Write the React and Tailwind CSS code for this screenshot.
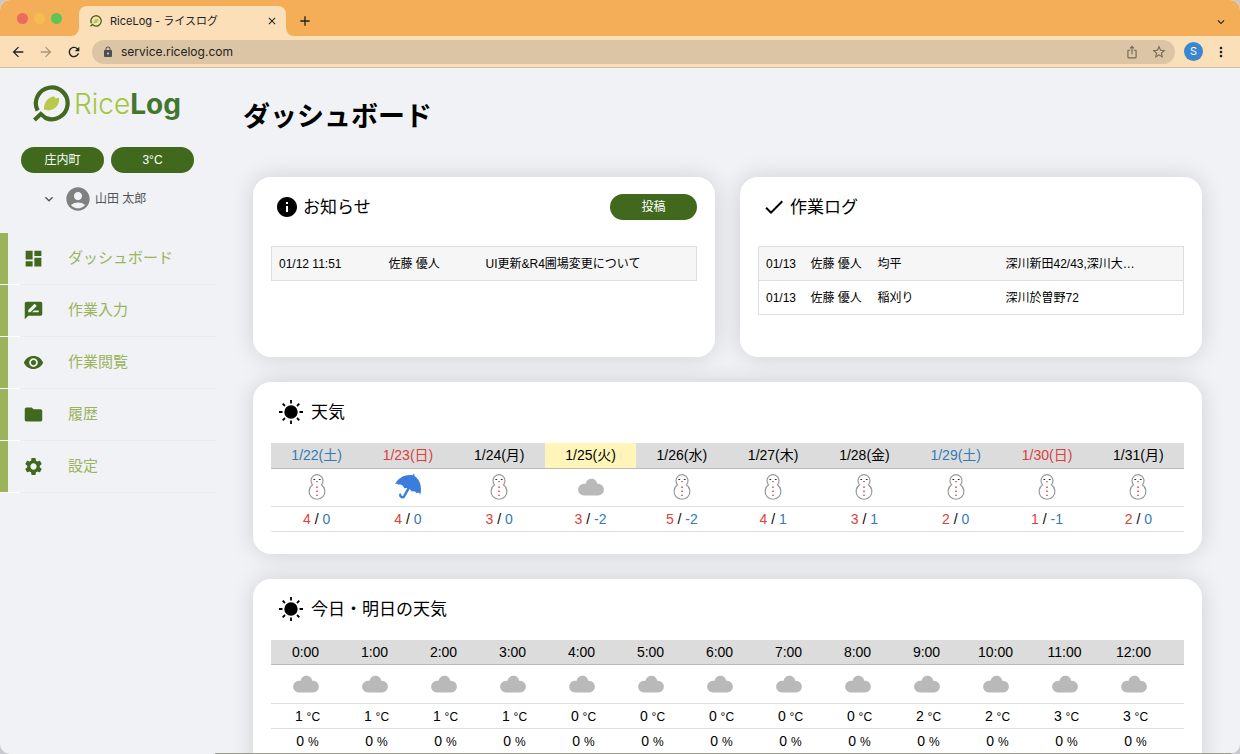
import React, { useState } from 'react';
import {
    MdAccountCircle,
    MdArrowBack,
    MdArrowForward,
    MdClose,
    MdDashboard,
    MdDone,
    MdExpandMore,
    MdFolder,
    MdInfo,
    MdIosShare,
    MdLock,
    MdMoreVert,
    MdRateReview,
    MdAdd,
    MdRefresh,
    MdSettings,
    MdStarOutline,
    MdVisibility,
} from 'react-icons/md';

const menu = [
    { label: 'ダッシュボード', icon: MdDashboard },
    { label: '作業入力', icon: MdRateReview },
    { label: '作業閲覧', icon: MdVisibility },
    { label: '履歴', icon: MdFolder },
    { label: '設定', icon: MdSettings },
];

const notices = [{ date: '01/12 11:51', user: '佐藤 優人', title: 'UI更新&R4圃場変更について' }];

const workLogs = [
    { date: '01/13', user: '佐藤 優人', work: '均平', field: '深川新田42/43,深川大…' },
    { date: '01/13', user: '佐藤 優人', work: '稲刈り', field: '深川於曽野72' },
];

const days = [
    { date: '1/22(土)', type: 'sat', icon: 'snow', high: 4, low: 0 },
    { date: '1/23(日)', type: 'sun', icon: 'rain', high: 4, low: 0 },
    { date: '1/24(月)', type: 'week', icon: 'snow', high: 3, low: 0 },
    { date: '1/25(火)', type: 'today', icon: 'cloud', high: 3, low: -2 },
    { date: '1/26(水)', type: 'week', icon: 'snow', high: 5, low: -2 },
    { date: '1/27(木)', type: 'week', icon: 'snow', high: 4, low: 1 },
    { date: '1/28(金)', type: 'week', icon: 'snow', high: 3, low: 1 },
    { date: '1/29(土)', type: 'sat', icon: 'snow', high: 2, low: 0 },
    { date: '1/30(日)', type: 'sun', icon: 'snow', high: 1, low: -1 },
    { date: '1/31(月)', type: 'week', icon: 'snow', high: 2, low: 0 },
];

const dayColors = {
    sat: 'text-[#337ab7]',
    sun: 'text-[#d9413c]',
    week: 'text-black',
    today: 'text-black bg-[#fff5b8]',
};

const hours = [1, 1, 1, 1, 0, 0, 0, 0, 0, 2, 2, 3, 3].map((temp, hour) => ({
    time: `${hour}:00`,
    temp,
    rain: 0,
}));

const LogoMark = ({ className }) => (
    <svg className={className} viewBox="0 0 37 37" fill="none">
        <path d="M4.6 25.6A15.9 15.9 0 1 1 12.6 33L7.8 29L1.4 35" stroke="#43691f" strokeWidth="4.2" />
        <path
            d="M11 24.6C10.4 18.4 14.8 11.8 21.4 11.6L22.6 13.4L26 12.6C27.4 20.6 20 27.8 11 24.6Z"
            fill="#b9c94a"
        />
    </svg>
);

const SunIcon = () => (
    <svg className="size-8" viewBox="0 0 32 32" stroke="#000" strokeWidth="1.8">
        <circle cx="16" cy="16" r="5.8" fill="#000" />
        <path d="M16 4v3.5M16 24.5V28M4 16h3.5M24.5 16H28M7.7 7.7L10 10M22 22l2.3 2.3M7.7 24.3L10 22M22 10l2.3-2.3" />
    </svg>
);

const SnowIcon = () => (
    <svg className="w-[18px] h-[26px]" viewBox="0 0 18 26">
        <path
            d="M4.6 10.8A6 6 0 1 1 13.4 10.8A7.9 7.9 0 1 1 4.6 10.8Z"
            fill="#fff"
            stroke="#999"
            strokeWidth="1.2"
        />
        <path d="M5.4 5h1.8v1H5.4zM10.8 5h1.8v1h-1.8zM8 7.2h2L9 8.6z" fill="#333" />
        <path d="M8.3 12.6h1.4V14H8.3zM8.3 16.5h1.4v1.4H8.3zM8.3 20.7h1.4v1.4H8.3z" fill="#d33" />
    </svg>
);

const RainIcon = () => (
    <svg className="size-[26px]" viewBox="0 0 26 26">
        <path
            d="M17.4 1.2L18.4 0L19.6.6L19.4 2C24.8 5.4 27.2 12.6 25.4 20.6C24.6 19 23 18.4 21.4 19.2C20.4 17.4 18.6 16.8 16.8 17.8C15.6 14.8 12 13 9.4 14.4C8.2 11.6 5.8 9.8 3.6 10.8C2.6 9.6 1.2 9.4.2 10C2.6 4.4 9.6 0 17.4 1.2Z"
            fill="#3b7ddd"
        />
        <path d="M13.4 14.6L9.2 22.2A2.2 2.2 0 0 1 5.2 20.8" fill="none" stroke="#3b7ddd" strokeWidth="2.4" strokeLinecap="round" />
    </svg>
);

const CloudIcon = () => (
    <svg className="w-[26px] h-[18px]" viewBox="0 0 26 18">
        <path d="M5.9 5.8H7.6C8 2.8 10.4.8 13.4.8S18.8 2.8 19.2 5.8H20.1A5.8 5.8 0 0 1 20.1 17.4H5.9A5.8 5.8 0 0 1 5.9 5.8Z" fill="#b9b9b9" />
    </svg>
);

const weatherIcons = { snow: SnowIcon, rain: RainIcon, cloud: CloudIcon };

const BrowserBar = () => (
    <header className="shrink-0 font-['Inter','Noto_Sans_CJK_JP',sans-serif] text-[#222]">
        <div className="flex h-9 items-end bg-[#f3ae57] pl-4 pr-3">
            <div className="flex gap-[6px] self-center pl-px">
                <span className="size-[11px] rounded-full bg-[#ec6a5e]"></span>
                <span className="size-[11px] rounded-full bg-[#f4bd4f]"></span>
                <span className="size-[11px] rounded-full bg-[#5fc454]"></span>
            </div>
            <svg className="ml-[9px] size-2" viewBox="0 0 8 8">
                <path d="M8 0V8H0A8 8 0 0 0 8 0Z" fill="#fadfb9" />
            </svg>
            <div className="flex h-[30px] w-[207px] items-center rounded-t-lg bg-[#fadfb9] pl-[11px] pr-2">
                <LogoMark className="size-3" />
                <span className="ml-2 flex-1 text-[11px]">RiceLog - ライスログ</span>
                <button aria-label="タブを閉じる">
                    <MdClose className="size-3" />
                </button>
            </div>
            <svg className="size-2" viewBox="0 0 8 8">
                <path d="M0 0V8H8A8 8 0 0 1 0 0Z" fill="#fadfb9" />
            </svg>
            <button className="mb-[7px] ml-[3px]" aria-label="新しいタブ">
                <MdAdd className="size-4" />
            </button>
            <button className="mb-[7px] ml-auto" aria-label="タブを検索">
                <MdExpandMore className="size-[14px]" />
            </button>
        </div>
        <div className="flex h-8 items-center border-b border-[#d3bd9c] bg-[#fadfb9] pl-[10px] pr-[11px]">
            <button aria-label="戻る">
                <MdArrowBack className="size-4" />
            </button>
            <button className="ml-3 text-[#a8967c]" aria-label="進む">
                <MdArrowForward className="size-4" />
            </button>
            <button className="ml-3" aria-label="再読み込み">
                <MdRefresh className="size-4" />
            </button>
            <div className="ml-[10px] flex h-6 flex-1 items-center rounded-full bg-[#dcc5a4] pl-[10px] pr-2">
                <MdLock className="size-3 text-[#4b4f55]" />
                <input
                    className="ml-[7px] flex-1 bg-transparent text-xs outline-none"
                    type="text"
                    aria-label="アドレス"
                    defaultValue="service.ricelog.com"
                />
                <button className="text-[#75695a]" aria-label="共有">
                    <MdIosShare className="size-[14px]" />
                </button>
                <button className="ml-3 text-[#75695a]" aria-label="ブックマーク">
                    <MdStarOutline className="size-4" />
                </button>
            </div>
            <button className="ml-[9px] size-[19px] rounded-full bg-[#3a86cf] text-[11px] text-white">S</button>
            <button className="ml-[10px]" aria-label="メニュー">
                <MdMoreVert className="size-4" />
            </button>
        </div>
    </header>
);

const Sidebar = ({ current, onSelect }) => (
    <aside className="w-[215px] shrink-0">
        <a href="#" className="flex items-center pl-[33px] pt-[17px]">
            <LogoMark className="size-[37px]" />
            <span className="ml-1 font-['Inter',sans-serif] text-[28px] leading-8 font-light text-[#a5c53f]">
                Rice<span className="font-bold text-[#43762f]">Log</span>
            </span>
        </a>

        <div className="mt-[25px] flex gap-[7px] pl-[21px] text-xs text-white">
            <span className="flex h-[26px] w-[83px] items-center justify-center rounded-full bg-[#40691d]">庄内町</span>
            <span className="flex h-[26px] w-[83px] items-center justify-center rounded-full bg-[#40691d]">3°C</span>
        </div>

        <button className="mt-3 flex items-center pl-[41px] text-xs text-[#555]">
            <MdExpandMore className="size-4" />
            <MdAccountCircle className="ml-[7px] size-7 text-[#808080]" />
            <span className="ml-[3px]">山田 太郎</span>
        </button>

        <nav className="mt-5">
            {menu.map(({ label, icon: Icon }) => (
                <a
                    key={label}
                    href="#"
                    className="flex h-[52px] text-[#9bb45c]"
                    aria-current={current === label ? 'page' : undefined}
                    onClick={() => onSelect(label)}
                >
                    <span className="w-5 border-b border-white">
                        <span className="block h-full w-2 bg-[#9bb45c]"></span>
                    </span>
                    <span className="flex flex-1 items-center border-b border-[#eaebee] pl-[3px]">
                        <Icon className="size-[21px] text-[#40691d]" />
                        <span className="ml-6 text-[15px]">{label}</span>
                    </span>
                </a>
            ))}
        </nav>
    </aside>
);

const Card = ({ icon, title, action, className = '', children }) => (
    <section className={`rounded-[18px] bg-white px-[18px] pt-[17px] shadow-[0_0_25px_rgba(0,0,0,0.14)] ${className}`}>
        <div className="flex h-[26px] items-center justify-between pl-1">
            <h2 className="flex items-center gap-1 text-[17px]">
                {icon}
                <span className="pt-0.5">{title}</span>
            </h2>
            {action}
        </div>
        {children}
    </section>
);

const App = () => {
    const [current, setCurrent] = useState('ダッシュボード');

    return (
        <div className="h-screen bg-[#c9c9cf] font-['Liberation_Sans','Noto_Sans_CJK_JP',sans-serif] text-black">
            <div className="flex h-full flex-col overflow-hidden rounded-[10px] bg-[#f0f2f6]">
                <BrowserBar />

                <div className="flex min-h-0 flex-1">
                    <Sidebar current={current} onSelect={setCurrent} />

                    <div className="flex min-w-0 flex-1 flex-col">
                        <main className="min-h-0 flex-1 overflow-hidden pl-[38px] pr-[38px]">
                            <h1 className="-ml-[10px] pt-[29px] text-[27px] leading-10 font-bold">ダッシュボード</h1>

                            <div className="mt-10 grid grid-cols-2 gap-[25px]">
                                <Card
                                    className="min-h-[180px]"
                                    icon={<MdInfo className="size-6" />}
                                    title="お知らせ"
                                    action={
                                        <button className="h-[26px] w-[87px] rounded-full bg-[#40691d] text-xs text-white">
                                            投稿
                                        </button>
                                    }
                                >
                                    <table className="mt-[26px] w-full table-fixed border border-[#dedede] text-left text-xs">
                                        <tbody>
                                            {notices.map((n) => (
                                                <tr key={n.date} className="h-[34px] bg-[#f6f6f6]">
                                                    <td className="w-[110px] pt-px pl-[7px]">{n.date}</td>
                                                    <td className="w-[97px] pt-px pl-[7px]">{n.user}</td>
                                                    <td className="pt-px pl-[7px]">{n.title}</td>
                                                </tr>
                                            ))}
                                        </tbody>
                                    </table>
                                </Card>

                                <Card className="min-h-[180px]" icon={<MdDone className="size-6" />} title="作業ログ">
                                    <table className="mt-[26px] w-full table-fixed border border-[#dedede] text-left text-xs">
                                        <tbody>
                                            {workLogs.map((log) => (
                                                <tr key={log.work} className="h-[34px] border-b border-[#dedede] odd:bg-[#f6f6f6]">
                                                    <td className="w-[45px] pt-px pl-[7px]">{log.date}</td>
                                                    <td className="w-[67px] pt-px pl-[7px]">{log.user}</td>
                                                    <td className="w-32 pt-px pl-[7px]">{log.work}</td>
                                                    <td className="truncate pt-px pl-[7px]">{log.field}</td>
                                                </tr>
                                            ))}
                                        </tbody>
                                    </table>
                                </Card>
                            </div>

                            <Card className="mt-[25px] pb-[22px]" icon={<SunIcon />} title="天気">
                                <table className="mt-[18px] w-full table-fixed text-center text-sm leading-5">
                                    <thead>
                                        <tr className="h-[25px] border-b border-[#bbb] bg-[#dcdcdc]">
                                            {days.map((d) => (
                                                <th key={d.date} className={`font-normal ${dayColors[d.type]}`}>
                                                    {d.date}
                                                </th>
                                            ))}
                                        </tr>
                                    </thead>
                                    <tbody>
                                        <tr className="h-[38px] border-b border-[#dedede]">
                                            {days.map((d) => {
                                                const Icon = weatherIcons[d.icon];
                                                return (
                                                    <td key={d.date}>
                                                        <div className="flex justify-center">
                                                            <Icon />
                                                        </div>
                                                    </td>
                                                );
                                            })}
                                        </tr>
                                        <tr className="h-[25px] border-b border-[#dedede]">
                                            {days.map((d) => (
                                                <td key={d.date}>
                                                    <span className="text-[#d9413c]">{d.high}</span> /{' '}
                                                    <span className="text-[#337ab7]">{d.low}</span>
                                                </td>
                                            ))}
                                        </tr>
                                    </tbody>
                                </table>
                            </Card>

                            <Card className="mt-[25px] pb-[22px]" icon={<SunIcon />} title="今日・明日の天気">
                                <table className="mt-[18px] w-full table-fixed text-center text-sm leading-5">
                                    <thead>
                                        <tr className="h-[25px] border-b border-[#bbb] bg-[#dcdcdc]">
                                            {hours.map((h) => (
                                                <th key={h.time} className="w-[69px] font-normal">
                                                    {h.time}
                                                </th>
                                            ))}
                                            <th></th>
                                        </tr>
                                    </thead>
                                    <tbody>
                                        <tr className="h-[39px] border-b border-[#dedede]">
                                            {hours.map((h) => (
                                                <td key={h.time}>
                                                    <div className="flex justify-center">
                                                        <CloudIcon />
                                                    </div>
                                                </td>
                                            ))}
                                            <td></td>
                                        </tr>
                                        <tr className="h-[25px] border-b border-[#dedede]">
                                            {hours.map((h) => (
                                                <td key={h.time} className="pl-1">
                                                    {h.temp} <span className="text-xs">°C</span>
                                                </td>
                                            ))}
                                            <td></td>
                                        </tr>
                                        <tr className="h-[25px]">
                                            {hours.map((h) => (
                                                <td key={h.time} className="pl-1">
                                                    {h.rain} <span className="text-xs">%</span>
                                                </td>
                                            ))}
                                            <td></td>
                                        </tr>
                                    </tbody>
                                </table>
                            </Card>
                        </main>
                        <footer className="h-px bg-[#9c9c8c]"></footer>
                    </div>
                </div>
            </div>
        </div>
    );
};

export default App;
